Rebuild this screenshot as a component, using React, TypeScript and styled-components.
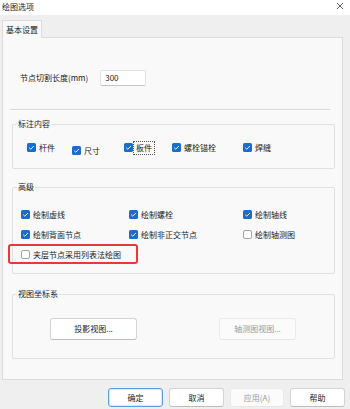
import React from "react";
import styled, { createGlobalStyle } from "styled-components";

const GlobalStyle = createGlobalStyle`
  html, body {
    margin: 0;
    padding: 0;
    background: #efefef;
  }
  * {
    box-sizing: border-box;
  }
`;

const Window = styled.div`
  width: 350px;
  height: 409px;
  overflow: hidden;
  background: #efefef;
  font-family: "Noto Sans CJK SC", "Noto Sans", sans-serif;
  font-size: 8px;
  color: #1b1b1b;
  display: flex;
  flex-direction: column;
`;

const TitleBar = styled.div`
  height: 15px;
  background: #ffffff;
  display: flex;
  align-items: center;
  justify-content: space-between;
  padding: 0 6px 2px 2px;
  line-height: 10px;
`;

const CloseBtn = styled.svg`
  width: 8px;
  height: 8px;
  display: block;
  margin-top: -1px;
`;

const Body = styled.div`
  padding: 5px 7px 0 2px;
  display: flex;
  flex-direction: column;
`;

const TabStrip = styled.div`
  display: flex;
  height: 17px;
`;

const Tab = styled.div`
  width: 40px;
  height: 18px;
  background: #f9f9f9;
  border: 1px solid #dcdcdc;
  border-bottom: none;
  display: flex;
  align-items: center;
  justify-content: center;
  line-height: 10px;
  position: relative;
  z-index: 1;
`;

const Panel = styled.div`
  height: 343px;
  background: #f9f9f9;
  border: 1px solid #dcdcdc;
  padding: 0 7px 0 9px;
  display: flex;
  flex-direction: column;
`;

const FieldRow = styled.div`
  margin-top: 32px;
  padding-left: 8px;
  height: 16px;
  display: flex;
  align-items: center;
  gap: 12px;
  line-height: 10px;
`;

const NumberInput = styled.div`
  width: 46px;
  height: 16px;
  background: #ffffff;
  border: 1px solid #e3e3e3;
  border-bottom-color: #c4c4c4;
  border-radius: 2px;
  padding-left: 4px;
  display: flex;
  align-items: center;
`;

const Separator = styled.div`
  margin: 23px 5px 0 -2px;
  border-top: 1px solid #d8d8d8;
  border-bottom: 1px solid #ffffff;
`;

const Group = styled.div<{ $gap: number; $pt: number; $pb: number }>`
  position: relative;
  margin-top: ${(p) => p.$gap}px;
  border: 1px solid #e0e0e0;
  border-radius: 2px;
  padding: ${(p) => p.$pt}px 0 ${(p) => p.$pb}px 0;
`;

const Legend = styled.span`
  position: absolute;
  top: -6px;
  left: 4px;
  padding: 0 1px;
  background: #f9f9f9;
  line-height: 10px;
`;

const MarkGrid = styled.div`
  display: grid;
  grid-template-columns: 45px 52px 48px 71px auto;
  padding-left: 14px;
  align-items: start;
`;

const AdvGrid = styled.div`
  display: grid;
  grid-template-columns: 108px 114px auto;
  grid-auto-rows: 9px;
  row-gap: 11px;
  padding-left: 8px;
`;

const Item = styled.label<{ $dy?: number }>`
  position: relative;
  display: flex;
  align-items: center;
  gap: 2px;
  height: 9px;
  margin-top: ${(p) => p.$dy ?? 0}px;
  line-height: 10px;
  white-space: nowrap;
`;

const ItemText = styled.span<{ $focus?: boolean }>`
  padding: 0 1px;
  outline: ${(p) => (p.$focus ? "1px dotted #555" : "none")};
  outline-offset: 1px;
`;

const Highlight = styled.span`
  position: absolute;
  left: -13px;
  top: -6px;
  width: 130px;
  height: 20px;
  border: 2px solid #e8383d;
  border-radius: 3px;
  pointer-events: none;
`;

const ButtonRow = styled.div<{ $pl: number; $gap: number }>`
  display: flex;
  padding-left: ${(p) => p.$pl}px;
  gap: ${(p) => p.$gap}px;
`;

const Button = styled.div<{ $w: number; $h?: number; $disabled?: boolean; $primary?: boolean }>`
  width: ${(p) => p.$w}px;
  height: ${(p) => p.$h ?? 22}px;
  background: ${(p) => (p.$disabled ? "#fbfbfb" : "#ffffff")};
  color: ${(p) => (p.$disabled ? "#9a9a9a" : "#1b1b1b")};
  border: 1px solid
    ${(p) => (p.$primary ? "#5b9fe3" : p.$disabled ? "#ebebeb" : "#d4d4d4")};
  box-shadow: ${(p) => (p.$primary ? "inset 0 0 0 1px #d6e7f8" : "none")};
  border-bottom-color: ${(p) =>
    p.$primary ? "#5b9fe3" : p.$disabled ? "#e6e6e6" : "#bdbdbd"};
  border-radius: 3px;
  display: flex;
  align-items: center;
  justify-content: center;
  line-height: 10px;
`;

const Footer = styled.div`
  margin-top: 8px;
  display: flex;
  justify-content: flex-end;
  gap: 6px;
  margin-right: -2px;
`;

function Check({ on }: { on: boolean }) {
  return (
    <svg width="9" height="9" viewBox="0 0 9 9" style={{ display: "block", flex: "none" }}>
      {on ? (
        <>
          <rect x="0" y="0" width="9" height="9" rx="1.6" fill="#1a6dcc" />
          <path d="M2.2 4.7 L3.8 6.2 L6.9 3" fill="none" stroke="#ffffff" strokeWidth="0.9" />
        </>
      ) : (
        <rect x="0.5" y="0.5" width="8" height="8" rx="1.6" fill="#ffffff" stroke="#8a8a8a" strokeWidth="0.8" />
      )}
    </svg>
  );
}

const advanced = [
  { text: "绘制虚线", on: true },
  { text: "绘制螺栓", on: true },
  { text: "绘制轴线", on: true },
  { text: "绘制背面节点", on: true },
  { text: "绘制非正交节点", on: true },
  { text: "绘制轴测图", on: false },
];

export default function App() {
  return (
    <Window>
      <GlobalStyle />
      <TitleBar>
        <span>绘图选项</span>
        <CloseBtn viewBox="0 0 8 8">
          <path d="M1 1 L7 7 M7 1 L1 7" stroke="#333" strokeWidth="0.8" />
        </CloseBtn>
      </TitleBar>
      <Body>
        <TabStrip>
          <Tab>基本设置</Tab>
        </TabStrip>
        <Panel>
          <FieldRow>
            <span>节点切割长度(mm)</span>
            <NumberInput>300</NumberInput>
          </FieldRow>
          <Separator />

          <Group $gap={13} $pt={18} $pb={13}>
            <Legend>标注内容</Legend>
            <MarkGrid>
              <Item>
                <Check on />
                <ItemText>杆件</ItemText>
              </Item>
              <Item $dy={3}>
                <Check on />
                <ItemText>尺寸</ItemText>
              </Item>
              <Item>
                <Check on />
                <ItemText $focus>板件</ItemText>
              </Item>
              <Item>
                <Check on />
                <ItemText>螺栓锚栓</ItemText>
              </Item>
              <Item>
                <Check on />
                <ItemText>焊缝</ItemText>
              </Item>
            </MarkGrid>
          </Group>

          <Group $gap={18} $pt={22} $pb={14}>
            <Legend>高级</Legend>
            <AdvGrid>
              {advanced.map((a) => (
                <Item key={a.text}>
                  <Check on={a.on} />
                  <ItemText>{a.text}</ItemText>
                </Item>
              ))}
              <Item>
                <Highlight />
                <Check on={false} />
                <ItemText>夹层节点采用列表法绘图</ItemText>
              </Item>
            </AdvGrid>
          </Group>

          <Group $gap={20} $pt={23} $pb={18}>
            <Legend>视图坐标系</Legend>
            <ButtonRow $pl={37} $gap={82}>
              <Button $w={87}>投影视图...</Button>
              <Button $w={77} $disabled>
                轴测图视图...
              </Button>
            </ButtonRow>
          </Group>
        </Panel>
        <Footer>
          <Button $w={55} $h={19} $primary>
            确定
          </Button>
          <Button $w={55} $h={19}>
            取消
          </Button>
          <Button $w={54} $h={19} $disabled>
            应用(A)
          </Button>
          <Button $w={55} $h={19}>
            帮助
          </Button>
        </Footer>
      </Body>
    </Window>
  );
}
